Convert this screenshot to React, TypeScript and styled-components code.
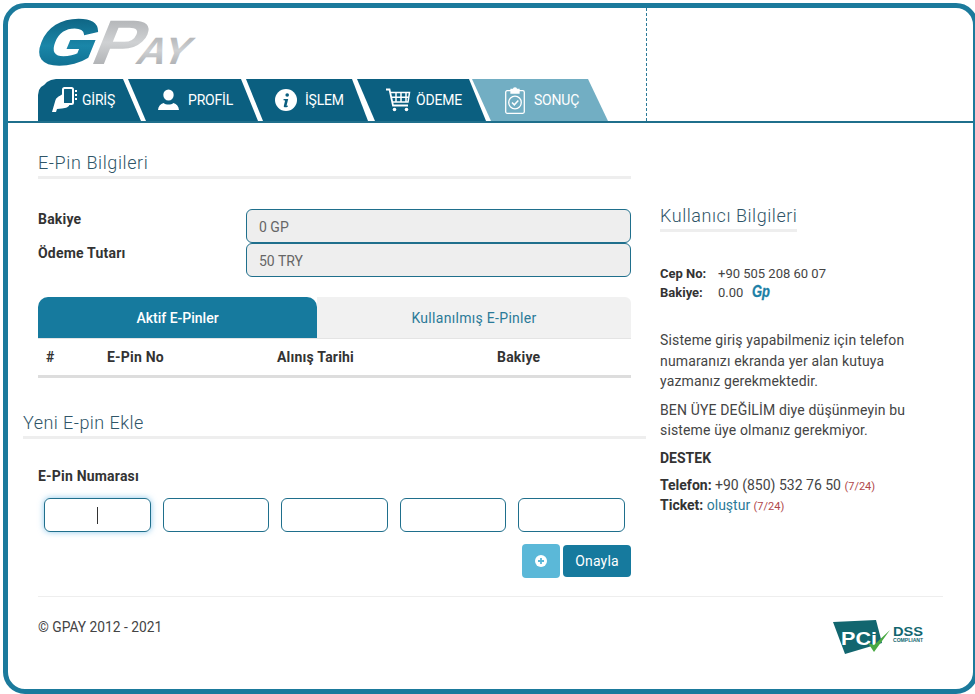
import React from "react";
import styled, { createGlobalStyle } from "styled-components";

const Global = createGlobalStyle`
  html, body { margin: 0; padding: 0; background: #fff; overflow: hidden; }
  body { font-family: Roboto, "Noto Sans", Arial, sans-serif; color: #333; font-size: 14px; }
  * { box-sizing: border-box; }
`;

const Frame = styled.div`
  margin: 3px 0 0 3px;
  width: 975px;
  height: 691px;
  border: 5px solid #1b7a9c;
  border-radius: 22px;
  background: #fff;
`;
const Header = styled.header`
  height: 115px;
  border-bottom: 2px solid #1f6f8c;
  display: flex;
`;
const Brand = styled.div`
  width: 638px;
  padding: 10px 0 0 30px;
  display: flex;
  flex-direction: column;
  justify-content: space-between;
`;
const LogoSvg = styled.svg`
  overflow: visible;
  display: block;
`;
const HeaderSide = styled.div`
  flex: 1;
  border-left: 1px dashed #2b7a98;
`;
const Tabs = styled.nav`
  display: flex;
  height: 42px;
`;
const Tab = styled.a<{ $w: number; $back: number; $pad: number; $gap: number; $shape: string; $done?: boolean }>`
  width: ${(p) => p.$w}px;
  margin-left: ${(p) => -p.$back}px;
  padding-left: ${(p) => p.$pad}px;
  gap: ${(p) => p.$gap}px;
  clip-path: polygon(${(p) => p.$shape});
  background: ${(p) => (p.$done ? "#72aec3" : "#0b5f80")};
  display: flex;
  align-items: center;
  color: #fff;
  font-size: 14px;
  letter-spacing: -0.2px;
`;
const Main = styled.main`
  padding: 0 30px;
`;
const Columns = styled.div`
  display: grid;
  grid-template-columns: 593px 283px;
  column-gap: 29px;
`;
const Left = styled.section`
  min-width: 0;
`;
const Heading = styled.h2<{ $bleed?: boolean; $top: number }>`
  margin: ${(p) => p.$top}px ${(p) => (p.$bleed ? "-15px" : "0")} 0;
  font-size: 18px;
  font-weight: 300;
  line-height: 26px;
  letter-spacing: ${(p) => (p.$bleed ? 0.45 : 0.6)}px;
  color: #2f5568;
  border-bottom: 3px solid #eeeeee;
`;
const Fields = styled.div`
  margin-top: 30px;
  display: grid;
  grid-template-columns: 208px 385px;
  grid-auto-rows: 34px;
`;
const Label = styled.label`
  font-weight: 700;
  font-size: 14px;
  letter-spacing: 0.2px;
  line-height: 20px;
  color: #333;
`;
const ReadOnly = styled.input`
  width: 100%;
  height: 34px;
  padding: 2px 12px 0;
  border: 1px solid #1f6f8c;
  border-radius: 6px;
  background: #eeeeee;
  color: #666;
  font: 14px Roboto, sans-serif;
  outline: none;
`;
const PinTabs = styled.div`
  margin-top: 20px;
  display: grid;
  grid-template-columns: 279px 314px;
  height: 41px;
`;
const PinTab = styled.div<{ $active?: boolean }>`
  display: flex;
  align-items: center;
  justify-content: center;
  font-size: 14px;
  letter-spacing: ${(p) => (p.$active ? 0 : 0.3)}px;
  font-weight: ${(p) => (p.$active ? 500 : 400)};
  color: ${(p) => (p.$active ? "#fff" : "#2b7a98")};
  background: ${(p) => (p.$active ? "#167a9e" : "#f1f1f1")};
  border-radius: ${(p) => (p.$active ? "10px 10px 0 0" : "0 6px 0 0")};
`;
const TableHead = styled.div`
  display: grid;
  grid-template-columns: 61px 170px 220px 1fr;
  align-items: center;
  height: 40px;
  padding-left: 8px;
  border-top: 1px solid #e4e4e4;
  border-bottom: 3px solid #dddddd;
  font-size: 14px;
  letter-spacing: 0.2px;
  font-weight: 700;
  color: #333;
`;
const PinLabel = styled.div`
  margin-top: 27px;
  font-size: 14px;
  letter-spacing: 0.2px;
  font-weight: 700;
  line-height: 20px;
`;
const PinRow = styled.div`
  margin-top: 12px;
  padding: 0 6px;
  display: grid;
  grid-template-columns: repeat(5, 1fr);
  column-gap: 12px;
`;
const PinBox = styled.div<{ $focus?: boolean }>`
  height: 34px;
  border: 1px solid #1f6f8c;
  border-radius: 6px;
  display: flex;
  align-items: center;
  justify-content: center;
  box-shadow: ${(p) => (p.$focus ? "0 0 6px rgba(60,160,220,.6)" : "none")};
`;
const Caret = styled.span`
  width: 1px;
  height: 17px;
  background: #333;
`;
const Actions = styled.div`
  margin-top: 12px;
  display: flex;
  justify-content: flex-end;
  align-items: center;
  gap: 3px;
`;
const AddButton = styled.button`
  width: 38px;
  height: 34px;
  border: 0;
  border-radius: 4px;
  background: #5bb8d8;
  display: flex;
  align-items: center;
  justify-content: center;
  padding: 0;
`;
const ConfirmButton = styled.button`
  width: 68px;
  height: 32px;
  border: 0;
  border-radius: 4px;
  background: #167a9e;
  color: #fff;
  font: 400 14px Roboto, sans-serif;
  letter-spacing: 0.2px;
  padding: 0;
`;
const Right = styled.aside`
  min-width: 0;
`;
const SideHeading = styled.h2`
  display: inline-block;
  margin: 80px 0 0;
  font-size: 18px;
  font-weight: 300;
  line-height: 26px;
  letter-spacing: 0.55px;
  color: #2f5568;
  border-bottom: 3px solid #eeeeee;
`;
const InfoList = styled.div`
  margin-top: 32px;
  font-size: 13px;
  line-height: 19px;
`;
const InfoRow = styled.div`
  display: flex;
  align-items: center;
`;
const InfoKey = styled.b`
  width: 58px;
  font-weight: 700;
`;
const InfoValue = styled.span`
  color: #444;
`;
const Para = styled.p<{ $top: number }>`
  margin: ${(p) => p.$top}px 0 0;
  font-size: 14px;
  line-height: 20.5px;
  color: #444;
  letter-spacing: 0.15px;
`;
const SupportTitle = styled.div`
  margin-top: 7px;
  font-weight: 700;
  line-height: 20px;
`;
const Support = styled.div`
  margin-top: 7px;
  font-size: 14px;
  line-height: 20px;
  color: #444;
`;
const Strong = styled.b`
  color: #333;
  font-weight: 700;
`;
const TicketLink = styled.a`
  color: #2b7a98;
`;
const Hours = styled.small`
  font-size: 11px;
  line-height: 1;
  color: #b0474a;
`;
const Footer = styled.footer`
  margin-top: 18px;
  border-top: 1px solid #eeeeee;
  display: flex;
  justify-content: space-between;
  align-items: flex-start;
  padding: 20px 19px 0 0;
`;
const Copy = styled.div`
  font-size: 13.8px;
  line-height: 20px;
  color: #444;
`;
const PciBox = styled.div`
  margin-top: 3px;
  height: 35px;
`;
const CoinBox = styled.span`
  margin-left: 9px;
  display: inline-flex;
`;

const Logo = () => (
  <LogoSvg width="160" height="48" viewBox="0 0 160 48">
    <defs>
      <linearGradient id="lg" x1="0" y1="0" x2="0" y2="1">
        <stop offset="0" stopColor="#0a5876" />
        <stop offset=".55" stopColor="#1a86a8" />
        <stop offset="1" stopColor="#0b6587" />
      </linearGradient>
      <linearGradient id="lp" x1="0" y1="0" x2="0" y2="1">
        <stop offset="0" stopColor="#a5a7aa" />
        <stop offset=".5" stopColor="#cfd1d3" />
        <stop offset="1" stopColor="#a0a2a5" />
      </linearGradient>
    </defs>
    <text transform="translate(-7 46) skewX(-22)" fontFamily="Liberation Sans" fontWeight="700" fontSize="63" textLength="58" lengthAdjust="spacingAndGlyphs" fill="url(#lg)" stroke="url(#lg)" strokeWidth="2.500">G</text>
    <text transform="translate(50 46) skewX(-22)" fontFamily="Liberation Sans" fontWeight="700" fontSize="63" textLength="50" lengthAdjust="spacingAndGlyphs" fill="url(#lp)">P</text>
    <text transform="translate(96 46) skewX(-22)" fontFamily="Liberation Sans" fontWeight="700" fontSize="38" textLength="52" lengthAdjust="spacingAndGlyphs" fill="url(#lp)">AY</text>
  </LogoSvg>
);
const PhoneIcon = () => (
  <svg width="27" height="28" viewBox="0 0 27 28" fill="#fff">
    <rect x="13" y="2" width="10" height="16" rx="1.500" fill="none" stroke="#fff" strokeWidth="2" />
    <path d="M25 4h2v2h-2zM25 8h2v2h-2zM25 12h2v2h-2z" />
    <path d="M2 26L5.500 14C6.500 11.500 8.500 10.500 13 8v10h6.500c0 3-3.500 4-7.500 4.500l-5 .5-1 3z" />
  </svg>
);
const UserIcon = () => (
  <svg width="21" height="22" viewBox="0 0 21 22" fill="#fff">
    <ellipse cx="10.500" cy="6" rx="5.200" ry="5.600" />
    <path d="M0 21c.3-3.600 2.300-6 5.600-7 1.200 1 3 1.600 4.900 1.600s3.700-.6 4.900-1.600c3.300 1 5.300 3.400 5.600 7z" />
  </svg>
);
const InfoIcon = () => (
  <svg width="22" height="22" viewBox="0 0 22 22">
    <circle cx="11" cy="11" r="11" fill="#fff" />
    <circle cx="12.200" cy="6" r="1.800" fill="#0b5f80" />
    <path d="M8.600 10h4.600l-1.600 6.400c-.1.4.3.5 1.400.1l-.3 1.200c-1.500.8-4.300 1-3.900-.8l1.200-5c.1-.5-.3-.7-1.500-.7z" fill="#0b5f80" />
  </svg>
);
const CartIcon = () => (
  <svg width="25" height="24" viewBox="0 0 25 24" fill="none" stroke="#fff">
    <path d="M0 1.500h3.500L7 17.500h15" strokeWidth="1.800" />
    <path d="M5 4.500h18.500L22 14H7M10 4.500V14M15 4.500V14M20 4.500V14M6 9.200h17" strokeWidth="1.500" />
    <circle cx="8.500" cy="21.500" r="1.800" fill="#fff" stroke="none" />
    <circle cx="20.500" cy="21.500" r="1.800" fill="#fff" stroke="none" />
  </svg>
);
const ClipIcon = () => (
  <svg width="20" height="28" viewBox="0 0 20 28" fill="none" stroke="#fff" strokeWidth="1.300">
    <rect x="0.700" y="4.700" width="18.600" height="22.600" rx="1.500" />
    <path d="M6 7V3.500h2.500a1.500 1.500 0 0 1 3 0H14V7z" fill="#fff" />
    <circle cx="10" cy="16.500" r="6.300" />
    <path d="M7 16.500l2.300 2.300 4-4.300" strokeWidth="1.500" />
  </svg>
);
const PlusIcon = () => (
  <svg width="12" height="12" viewBox="0 0 12 12">
    <circle cx="6" cy="6" r="6" fill="#fff" />
    <path d="M6 3v6M3 6h6" stroke="#5bb8d8" strokeWidth="1.800" />
  </svg>
);
const Coin = () => (
  <LogoSvg width="18" height="18" viewBox="0 0 18 18">
    <text x="0" y="13" fontFamily="Liberation Sans" fontWeight="700" fontStyle="italic" fontSize="16" textLength="18" lengthAdjust="spacingAndGlyphs" fill="#1b7fa6" stroke="#1b7fa6" strokeWidth=".3">Gp</text>
  </LogoSvg>
);
const Pci = () => (
  <LogoSvg width="91" height="35" viewBox="0 0 91 35">
    <polygon points="0,2 43,0 49,23 12,34" fill="#12666f" />
    <text x="8" y="25" fontFamily="Liberation Sans" fontWeight="700" fontSize="19" textLength="36" lengthAdjust="spacingAndGlyphs" fill="#fff">PCi</text>
    <path d="M35 23l6 9L57 10 41 25z" fill="#49a942" />
    <text x="60" y="16" fontFamily="Liberation Sans" fontWeight="700" fontSize="13.500" textLength="30" lengthAdjust="spacingAndGlyphs" fill="#12666f">DSS</text>
    <text x="60" y="21.500" fontFamily="Liberation Sans" fontWeight="700" fontSize="4.500" textLength="30" lengthAdjust="spacingAndGlyphs" fill="#12666f">COMPLIANT</text>
  </LogoSvg>
);

export default function App() {
  return (
    <>
      <Global />
      <Frame>
        <Header>
          <Brand>
            <Logo />
            <Tabs>
              <Tab $w={103} $back={0} $pad={12} $gap={5} $shape="6px 6px, 9px 3px, 13px 1px, 18px 0, 85px 0, 103px 42px, 0 42px, 0 16px, 1px 11px, 3px 8px">
                <PhoneIcon />GİRİŞ
              </Tab>
              <Tab $w={130} $back={13} $pad={30} $gap={9} $shape="0 0, 113px 0, 130px 42px, 18px 42px">
                <UserIcon />PROFİL
              </Tab>
              <Tab $w={122} $back={12} $pad={29} $gap={8} $shape="0 0, 106px 0, 122px 42px, 17px 42px">
                <InfoIcon />İŞLEM
              </Tab>
              <Tab $w={129} $back={11} $pad={29} $gap={5} $shape="0 0, 112px 0, 129px 42px, 18px 42px">
                <CartIcon />ÖDEME
              </Tab>
              <Tab $w={136} $back={14} $pad={33} $gap={9} $shape="0 0, 116px 0, 136px 42px, 19px 42px" $done>
                <ClipIcon />SONUÇ
              </Tab>
            </Tabs>
          </Brand>
          <HeaderSide />
        </Header>
        <Main>
          <Columns>
            <Left>
              <Heading $top={27}>E-Pin Bilgileri</Heading>
              <Fields>
                <Label>Bakiye</Label>
                <ReadOnly readOnly value="0 GP" />
                <Label>Ödeme Tutarı</Label>
                <ReadOnly readOnly value="50 TRY" />
              </Fields>
              <PinTabs>
                <PinTab $active>Aktif E-Pinler</PinTab>
                <PinTab>Kullanılmış E-Pinler</PinTab>
              </PinTabs>
              <TableHead>
                <span>#</span>
                <span>E-Pin No</span>
                <span>Alınış Tarihi</span>
                <span>Bakiye</span>
              </TableHead>
              <Heading $top={32} $bleed>Yeni E-pin Ekle</Heading>
              <PinLabel>E-Pin Numarası</PinLabel>
              <PinRow>
                <PinBox $focus><Caret /></PinBox>
                <PinBox />
                <PinBox />
                <PinBox />
                <PinBox />
              </PinRow>
              <Actions>
                <AddButton aria-label="Ekle"><PlusIcon /></AddButton>
                <ConfirmButton>Onayla</ConfirmButton>
              </Actions>
            </Left>
            <Right>
              <SideHeading>Kullanıcı Bilgileri</SideHeading>
              <InfoList>
                <InfoRow><InfoKey>Cep No:</InfoKey><InfoValue>+90 505 208 60 07</InfoValue></InfoRow>
                <InfoRow><InfoKey>Bakiye:</InfoKey><InfoValue>0.00</InfoValue><CoinBox><Coin /></CoinBox></InfoRow>
              </InfoList>
              <Para $top={28}>Sisteme giriş yapabilmeniz için telefon numaranızı ekranda yer alan kutuya yazmanız gerekmektedir.</Para>
              <Para $top={8}>BEN ÜYE DEĞİLİM diye düşünmeyin bu sisteme üye olmanız gerekmiyor.</Para>
              <SupportTitle>DESTEK</SupportTitle>
              <Support>
                <div><Strong>Telefon:</Strong> +90 (850) 532 76 50 <Hours>(7/24)</Hours></div>
                <div><Strong>Ticket:</Strong> <TicketLink>oluştur</TicketLink> <Hours>(7/24)</Hours></div>
              </Support>
            </Right>
          </Columns>
          <Footer>
            <Copy>© GPAY 2012 - 2021</Copy>
            <PciBox><Pci /></PciBox>
          </Footer>
        </Main>
      </Frame>
    </>
  );
}
